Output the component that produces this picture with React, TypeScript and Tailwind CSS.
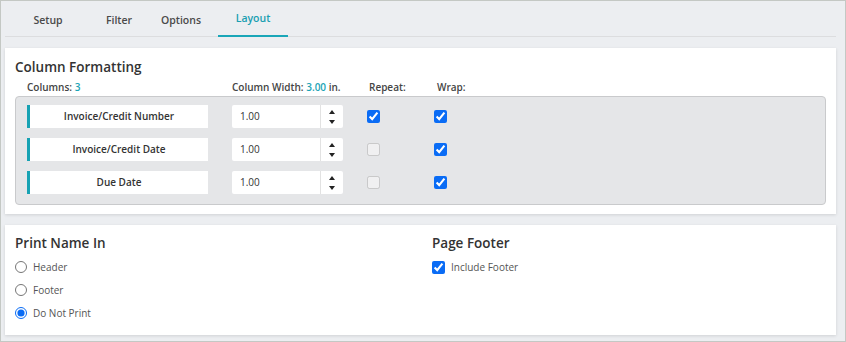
import React from "react";

const teal = "text-[#1aa3b5]";

function Tab({ label, w, active }: { label: string; w: string; active?: boolean }) {
  return (
    <div
      className={`${w} h-[36px] flex items-center justify-center text-[10.5px] font-semibold ${
        active ? "text-[#1a9fb1] border-b-2 border-[#1aa6b8]" : "text-[#4a4a4a]"
      }`}
    >
      <span className={active ? "mt-[2px]" : "mt-[4px]"}>{label}</span>
    </div>
  );
}

function Spinner() {
  return (
    <div className="w-[23px] h-full border-l border-[#e2e2e2] flex flex-col items-center justify-center gap-[6px]">
      <svg width="6" height="4" viewBox="0 0 6 4">
        <path d="M3 0 L6 4 L0 4 Z" fill="#222" />
      </svg>
      <svg width="6" height="4" viewBox="0 0 6 4">
        <path d="M0 0 L6 0 L3 4 Z" fill="#222" />
      </svg>
    </div>
  );
}

function Row({ label, repeat, repeatDisabled }: { label: string; repeat: boolean; repeatDisabled?: boolean }) {
  return (
    <div className="flex items-center h-[23px]">
      <div className="w-[181px] h-full bg-white flex border-l-[3px] border-[#17a2b3]">
        <div className="flex-1 flex items-center justify-center text-[10px] font-semibold text-[#333]">{label}</div>
      </div>
      <div className="ml-[24px] w-[111px] h-full bg-white rounded-[2px] flex items-center">
        <div className="flex-1 pl-[8px] text-[10px] text-[#333]">1.00</div>
        <Spinner />
      </div>
      <div className="ml-[24px] w-[13px] h-[13px] flex">
        <input
          type="checkbox"
          readOnly
          checked={repeat}
          disabled={repeatDisabled}
          className="w-[13px] h-[13px] accent-[#0a6cf5]"
        />
      </div>
      <div className="ml-[54px] w-[13px] h-[13px] flex">
        <input type="checkbox" readOnly checked className="w-[13px] h-[13px] accent-[#0a6cf5]" />
      </div>
    </div>
  );
}

function Radio({ label, checked }: { label: string; checked?: boolean }) {
  return (
    <label className="flex items-center h-[22px] text-[10px] text-[#555]">
      <input type="radio" name="printname" readOnly checked={!!checked} className="w-[12px] h-[12px] accent-[#0a6cf5]" />
      <span className="ml-[6px]">{label}</span>
    </label>
  );
}

export default function App() {
  return (
    <div className="w-[846px] h-[342px] border border-[#c4c8c4] bg-[#eceef1] font-['Open_Sans',sans-serif] overflow-hidden">
      <div className="ml-[4px] w-[831px] h-[36px] border-b border-[#dcdddf] flex">
        <div className="w-[8px]" />
        <Tab label="Setup" w="w-[70px]" />
        <Tab label="Filter" w="w-[72px]" />
        <Tab label="Options" w="w-[52px]" />
        <div className="w-[11px]" />
        <Tab label="Layout" w="w-[70px]" active />
      </div>

      <div className="ml-[4px] mt-[11px] w-[831px] h-[166px] bg-white shadow-[0_1px_3px_rgba(0,0,0,0.12)] px-[10px] pt-[9px]">
        <h2 className="text-[13.5px] leading-[20px] font-semibold text-[#333]">Column Formatting</h2>
        <div className="mt-[3px] h-[14px] flex items-center text-[10px] leading-[14px] font-semibold text-[#444]">
          <div className="ml-[12px] w-[205px]">
            Columns: <span className={teal}>3</span>
          </div>
          <div className="w-[137px]">
            Column Width: <span className={teal}>3.00</span> in.
          </div>
          <div className="w-[68px]">Repeat:</div>
          <div>Wrap:</div>
        </div>
        <div className="mt-[2px] w-[811px] h-[109px] bg-[#e5e6e8] border border-[#c9cacc] rounded-[4px] pl-[11px] pt-[8px] flex flex-col gap-[10px]">
          <Row label="Invoice/Credit Number" repeat />
          <Row label="Invoice/Credit Date" repeat={false} repeatDisabled />
          <Row label="Due Date" repeat={false} repeatDisabled />
        </div>
      </div>

      <div className="ml-[4px] mt-[11px] w-[831px] h-[110px] bg-white shadow-[0_1px_3px_rgba(0,0,0,0.12)] px-[10px] pt-[8px] flex">
        <div className="w-[417px]">
          <h2 className="text-[13.5px] leading-[20px] font-semibold text-[#333]">Print Name In</h2>
          <div className="mt-[3px] flex flex-col gap-[1px]">
            <Radio label="Header" />
            <Radio label="Footer" />
            <Radio label="Do Not Print" checked />
          </div>
        </div>
        <div>
          <h2 className="text-[13.5px] leading-[20px] font-semibold text-[#333]">Page Footer</h2>
          <label className="mt-[3px] flex items-center h-[22px] text-[10px] text-[#555]">
            <input type="checkbox" readOnly checked className="w-[13px] h-[13px] accent-[#0a6cf5]" />
            <span className="ml-[6px]">Include Footer</span>
          </label>
        </div>
      </div>
    </div>
  );
}
